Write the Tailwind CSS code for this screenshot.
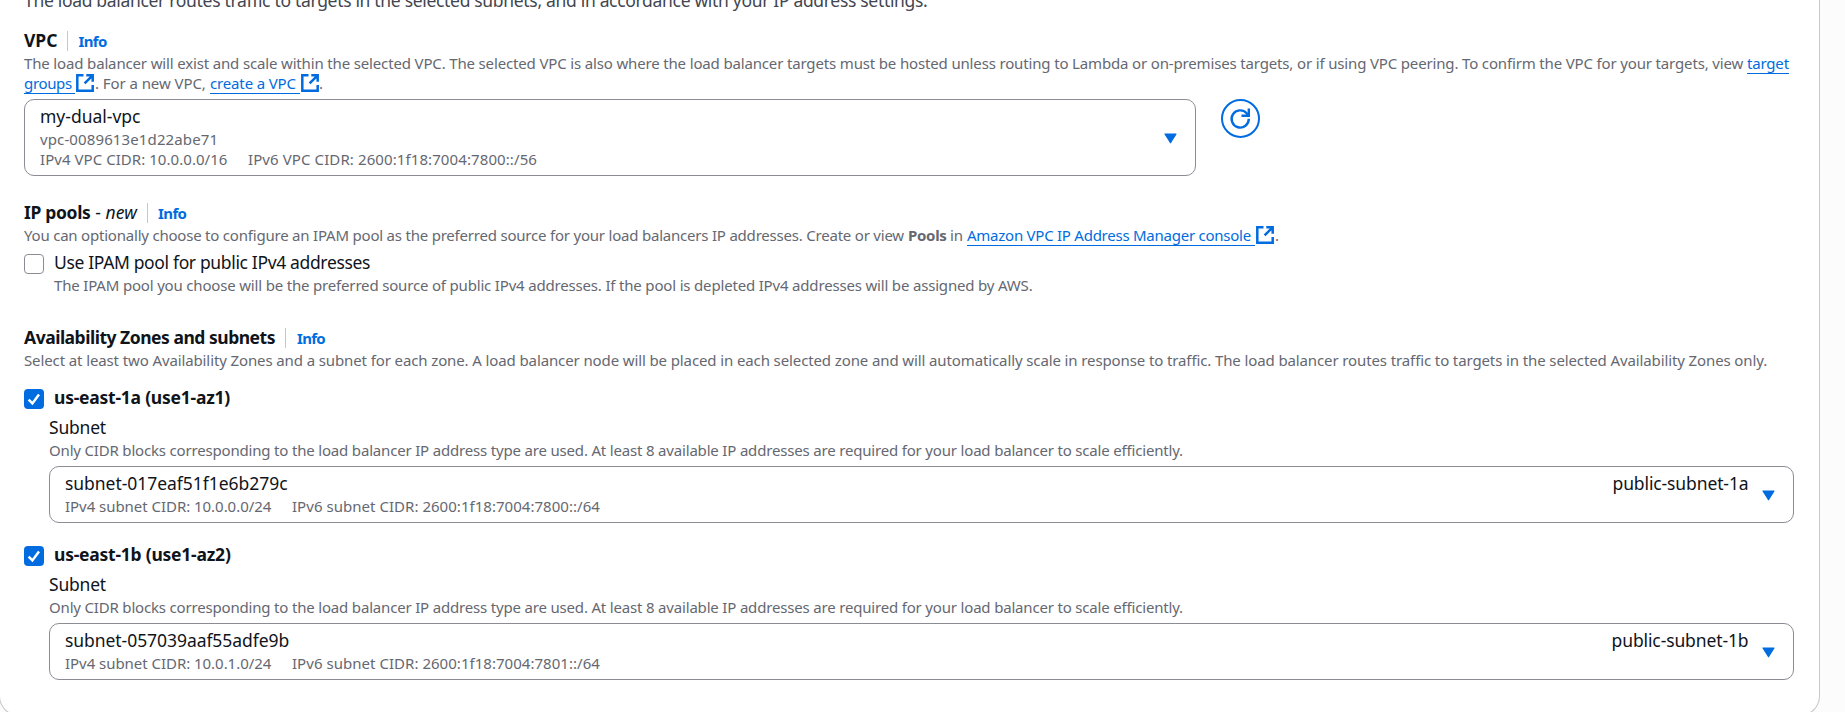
<!DOCTYPE html>
<html lang="en">
<head>
<meta charset="utf-8">
<title>Network mapping</title>
<script src="https://cdn.jsdelivr.net/npm/@tailwindcss/browser@4"></script>
</head>
<body class="h-[712px] overflow-hidden bg-[#fcfcfd] font-['Noto_Sans',sans-serif] text-[17.5px] leading-[25px] text-[#0f141a]">
<svg class="hidden">
  <symbol id="ext" viewBox="0 0 18 18"><path d="M7.5 1.3H1.3v15.4h15.4v-5.6M10.3 1.3h6.4v6.4M16.4 1.6 8.6 9.4" fill="none" stroke="#006ce0" stroke-width="2.5"/></symbol>
  <symbol id="caret" viewBox="0 0 13 11"><path d="M1 1h11L6.500 9.800z" fill="#006ce0" stroke="#006ce0" stroke-width="1.200" stroke-linejoin="round"/></symbol>
  <symbol id="check" viewBox="0 0 20 20"><path d="M4.600 10.600 8.400 14.400 15 5.600" fill="none" stroke="#fff" stroke-width="2.500"/></symbol>
</svg>
<main class="-ml-px h-[728px] w-[1821px] rounded-b-[20px] border-x border-b border-[#c6c6cd] bg-white pl-6 whitespace-nowrap">
  <p class="-mt-3 h-10 tracking-[-0.318px] text-[#424650]">The load balancer routes traffic to targets in the selected subnets, and in accordance with your IP address settings.</p>

  <section class="h-[172px]">
    <div class="flex h-[25px] items-baseline">
      <h3 class="font-bold">VPC</h3>
      <span class="ml-[10px] h-5 w-px self-center bg-[#c6c6cd]"></span>
      <a class="ml-[10px] text-[15px] font-bold tracking-[-0.6px] text-[#006ce0]">Info</a>
    </div>
    <div class="text-[15px] leading-5 text-[#656871]">
      <p class="h-5 tracking-[-0.154px]">The load balancer will exist and scale within the selected VPC. The selected VPC is also where the load balancer targets must be hosted unless routing to Lambda or on-premises targets, or if using VPC peering. To confirm the VPC for your targets, view <a class="inline-block h-[21px] border-b border-[#006ce0] text-[#006ce0]">target</a></p>
      <p class="flex h-5"><a class="h-[21px] w-[51px] border-b border-[#006ce0] tracking-[-0.35px] text-[#006ce0]">groups</a><svg class="mt-px ml-px size-[18px]"><use href="#ext"/></svg><span class="ml-px w-[115px] tracking-[-0.069px]">. For a new VPC,</span><a class="h-[21px] w-[90px] border-b border-[#006ce0] tracking-[-0.15px] text-[#006ce0]">create a VPC</a><svg class="mt-px ml-px size-[18px]"><use href="#ext"/></svg><span>.</span></p>
    </div>
    <div class="mt-[6px] flex items-start gap-[25px]">
      <div class="flex h-[77px] w-[1172px] items-start justify-between rounded-[10px] border border-[#8c8c94] pt-1 pr-[18.5px] pl-[15px]">
        <div>
          <p class="h-[25px]">my-dual-vpc</p>
          <p class="h-5 text-[15px] leading-5 tracking-[0.12px] text-[#656871]">vpc-0089613e1d22abe71</p>
          <p class="flex h-5 text-[15px] leading-5 text-[#656871]"><span class="w-[208px] tracking-[0.05px]">IPv4 VPC CIDR: 10.0.0.0/16</span><span class="tracking-[0.098px]">IPv6 VPC CIDR: 2600:1f18:7004:7800::/56</span></p>
        </div>
        <svg class="mt-[28.5px] h-[11px] w-[13px]"><use href="#caret"/></svg>
      </div>
      <button class="flex size-[39px] items-center justify-center rounded-full border-2 border-[#006ce0]">
        <svg class="size-[23px]" viewBox="0 0 23 23" fill="none" stroke="#006ce0" stroke-width="2.400"><path d="M19.800 11.800A8.600 8.600 0 1 1 17.600 6.200L19.200 8.200"/><path d="M19.800 1.500v7.200h-7.300"/></svg>
      </button>
    </div>
  </section>

  <section class="h-[125px]">
    <div class="flex h-[25px] items-baseline">
      <h3><b class="tracking-[-0.332px]">IP pools</b><span class="tracking-[0.1px]"> - <i>new</i></span></h3>
      <span class="ml-[10px] h-5 w-px self-center bg-[#c6c6cd]"></span>
      <a class="ml-[10px] text-[15px] font-bold tracking-[-0.6px] text-[#006ce0]">Info</a>
    </div>
    <p class="flex h-5 text-[15px] leading-5 text-[#656871]"><span class="w-[884px] tracking-[-0.21px]">You can optionally choose to configure an IPAM pool as the preferred source for your load balancers IP addresses. Create or view</span><b class="w-[42px] tracking-[-0.3px]">Pools</b><span class="w-[17px] tracking-[-0.2px]">in</span><a class="h-[21px] w-[288px] border-b border-[#006ce0] tracking-[-0.25px] text-[#006ce0]">Amazon VPC IP Address Manager console</a><svg class="mt-px ml-px size-[18px]"><use href="#ext"/></svg><span class="ml-px">.</span></p>
    <div class="mt-[5px] flex gap-[10px]">
      <span class="mt-1 size-5 rounded-[4px] border-[1.5px] border-[#8c8c94]"></span>
      <div>
        <p class="h-[25px] tracking-[-0.349px]">Use IPAM pool for public IPv4 addresses</p>
        <p class="text-[15px] leading-5 tracking-[-0.177px] text-[#656871]">The IPAM pool you choose will be the preferred source of public IPv4 addresses. If the pool is depleted IPv4 addresses will be assigned by AWS.</p>
      </div>
    </div>
  </section>

  <section>
    <div class="flex h-[25px] items-baseline">
      <h3 class="font-bold tracking-[-0.484px]">Availability Zones and subnets</h3>
      <span class="ml-[10px] h-5 w-px self-center bg-[#c6c6cd]"></span>
      <a class="ml-[11px] text-[15px] font-bold tracking-[-0.7px] text-[#006ce0]">Info</a>
    </div>
    <p class="h-[35px] text-[15px] leading-5 tracking-[-0.114px] text-[#656871]">Select at least two Availability Zones and a subnet for each zone. A load balancer node will be placed in each selected zone and will automatically scale in response to traffic. The load balancer routes traffic to targets in the selected Availability Zones only.</p>

    <div class="h-[157px]">
      <div class="flex h-[30px] gap-[10px]">
        <span class="mt-1 size-5 rounded-[4px] bg-[#006ce0]"><svg class="size-5"><use href="#check"/></svg></span>
        <b class="tracking-[-0.234px]">us-east-1a (use1-az1)</b>
      </div>
      <div class="ml-[25px]">
        <p class="h-[25px] tracking-[-0.2px]">Subnet</p>
        <p class="h-[26px] text-[15px] leading-5 tracking-[-0.18px] text-[#656871]">Only CIDR blocks corresponding to the load balancer IP address type are used. At least 8 available IP addresses are required for your load balancer to scale efficiently.</p>
        <div class="flex h-[57px] w-[1745px] items-start rounded-[10px] border border-[#8c8c94] pt-1 pr-[18.5px] pl-[15px]">
          <div class="grow">
            <p class="h-[25px] tracking-[-0.04px]">subnet-017eaf51f1e6b279c</p>
            <p class="flex text-[15px] leading-5 text-[#656871]"><span class="w-[227px] tracking-[-0.04px]">IPv4 subnet CIDR: 10.0.0.0/24</span><span class="tracking-[0.035px]">IPv6 subnet CIDR: 2600:1f18:7004:7800::/64</span></p>
          </div>
          <span class="tracking-[-0.114px]">public-subnet-1a</span>
          <svg class="mt-[18.5px] ml-[13px] h-[11px] w-[13px]"><use href="#caret"/></svg>
        </div>
      </div>
    </div>

    <div class="h-[157px]">
      <div class="flex h-[30px] gap-[10px]">
        <span class="mt-1 size-5 rounded-[4px] bg-[#006ce0]"><svg class="size-5"><use href="#check"/></svg></span>
        <b class="tracking-[-0.234px]">us-east-1b (use1-az2)</b>
      </div>
      <div class="ml-[25px]">
        <p class="h-[25px] tracking-[-0.2px]">Subnet</p>
        <p class="h-[26px] text-[15px] leading-5 tracking-[-0.18px] text-[#656871]">Only CIDR blocks corresponding to the load balancer IP address type are used. At least 8 available IP addresses are required for your load balancer to scale efficiently.</p>
        <div class="flex h-[57px] w-[1745px] items-start rounded-[10px] border border-[#8c8c94] pt-1 pr-[18.5px] pl-[15px]">
          <div class="grow">
            <p class="h-[25px] tracking-[-0.06px]">subnet-057039aaf55adfe9b</p>
            <p class="flex text-[15px] leading-5 text-[#656871]"><span class="w-[227px] tracking-[-0.04px]">IPv4 subnet CIDR: 10.0.1.0/24</span><span class="tracking-[0.035px]">IPv6 subnet CIDR: 2600:1f18:7004:7801::/64</span></p>
          </div>
          <span class="tracking-[-0.114px]">public-subnet-1b</span>
          <svg class="mt-[18.5px] ml-[13px] h-[11px] w-[13px]"><use href="#caret"/></svg>
        </div>
      </div>
    </div>
  </section>
</main>
</body>
</html>
